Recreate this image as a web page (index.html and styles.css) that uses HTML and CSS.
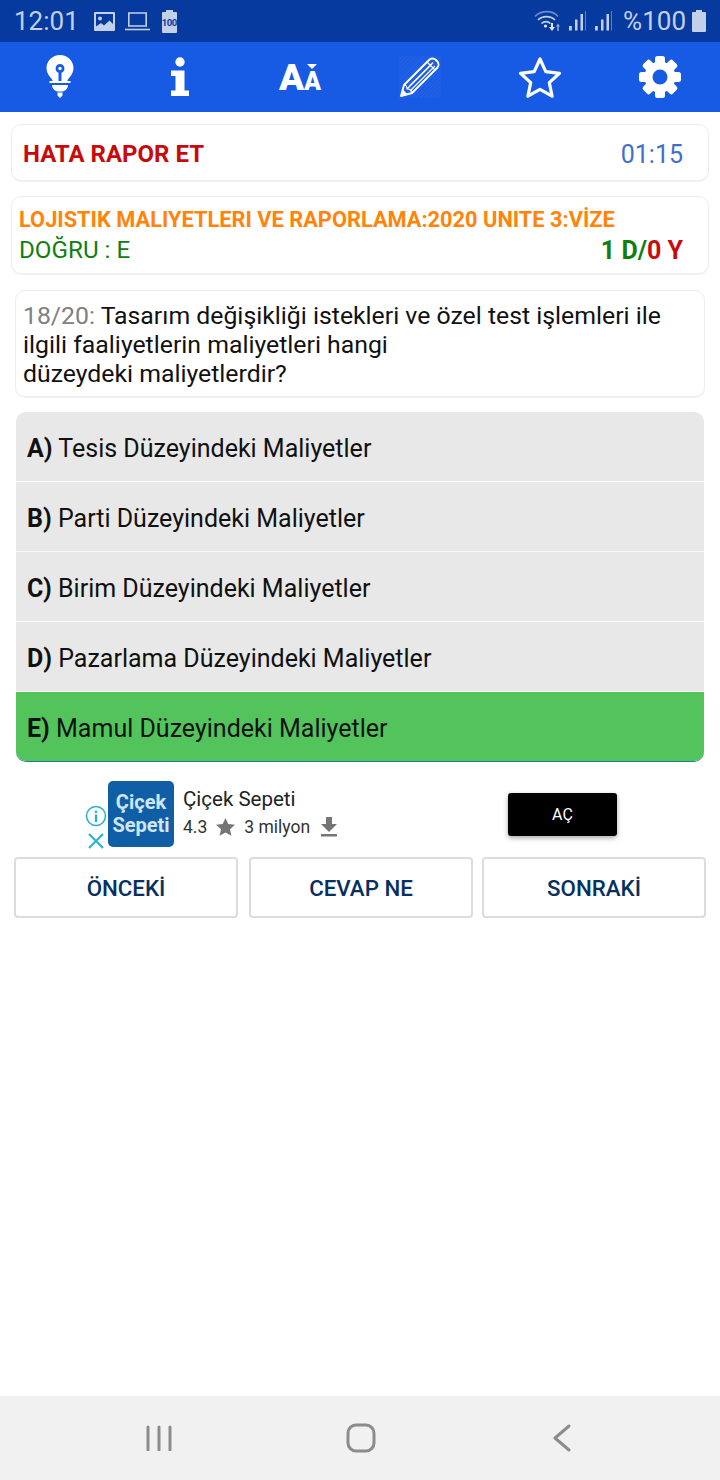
FILE: index.html
```html
<!DOCTYPE html>
<html lang="tr">
<head>
    <meta charset="UTF-8">
    <meta name="viewport" content="width=device-width, initial-scale=1.0">
    <title>Sınav</title>
    <link rel="stylesheet" href="styles.css">
</head>
<body>
    <div class="status-bar">
        <div class="status-left">
            <span class="clock">12:01</span>
            <svg class="st-image" width="21" height="19" viewBox="0 0 21 19"><path fill="#c3d0ea" fill-rule="evenodd" d="M1 0h19a1 1 0 0 1 1 1v17a1 1 0 0 1-1 1H1a1 1 0 0 1-1-1V1a1 1 0 0 1 1-1zM2 14.500V2h17v10l-3.500-3.500-5.500 5-3-2.500z"/><circle cx="6" cy="6.500" r="2" fill="#c3d0ea"/></svg>
            <svg class="st-laptop" width="25" height="20" viewBox="0 0 25 20"><path fill="none" stroke="#c3d0ea" stroke-width="1.600" d="M3.800 2h17.400v13H3.800z"/><path stroke="#c3d0ea" stroke-width="1.600" d="M0 18.500h25"/></svg>
            <div class="batt-small"><span>100</span></div>
        </div>
        <div class="status-right">
            <svg width="26" height="22" viewBox="0 0 26 22"><g fill="none" stroke="#c3d0ea" stroke-width="1.600"><path opacity=".55" d="M1 6.500c6-6.500 18-6.500 23 0"/><path d="M4 10c4.500-4.500 12.500-4.500 17 0"/><path d="M7.500 13.500c2.500-2.500 6.500-2.500 9 0"/></g><circle cx="11.500" cy="16" r="1.600" fill="#dfe6f5"/><path fill="#dfe6f5" d="M17 13h2v4h2l-3 4-3-4h2z"/><path fill="#8ea6d6" d="M24 13.500l2 3h-1.200V21h-1.600v-4.500H22z"/></svg>
            <svg width="17" height="22" viewBox="0 0 17 22"><g fill="#c3d0ea"><path d="M0 16h2.800v4.500H0zM6 9.500h2.500v11H6zM11.500 4H14v16.500h-2.500z"/><path opacity=".45" d="M16 1h1v19.500h-1z"/></g></svg>
            <svg width="17" height="22" viewBox="0 0 17 22"><g fill="#c3d0ea"><path d="M0 16h2.800v4.500H0zM6 9.500h2.500v11H6zM11.500 4H14v16.500h-2.500z"/><path opacity=".45" d="M16 1h1v19.500h-1z"/></g></svg>
            <span class="pct">%100</span>
            <svg width="14" height="22" viewBox="0 0 14 22"><path fill="#c3d0ea" d="M4 0h6v2h3a1 1 0 0 1 1 1v18a1 1 0 0 1-1 1H1a1 1 0 0 1-1-1V3a1 1 0 0 1 1-1h3z"/></svg>
        </div>
    </div>

    <div class="toolbar">
        <svg width="28" height="44" viewBox="0 0 28 44"><path fill="#fff" fill-rule="evenodd" d="M14 0c7.500 0 13.500 5.800 13.500 13 0 4-1.800 7-4 9.500-1.400 1.600-2 2.600-2.200 3.500H6.700c-.2-.9-.8-1.900-2.200-3.500C2.300 20 .5 17 .5 13 .5 5.800 6.500 0 14 0zm0 9a4.500 4.500 0 0 0-1.500 8.700V26h3v-8.300A4.500 4.500 0 0 0 14 9zm0 2.800a1.700 1.700 0 1 1 0 3.400 1.700 1.700 0 0 1 0-3.400z"/><path fill="#fff" d="M3.500 26h21v2h-21zM6 30h16c0 3-2 5.500-5 6.500h-6C8 35.500 6 33 6 30zM11.500 37.500h5v3L14 43l-2.500-2.500z"/></svg>
        <svg width="20" height="40" viewBox="0 0 20 40"><circle cx="10" cy="5" r="4.700" fill="#fff"/><path fill="#fff" d="M1 13.500h13.500v20H19V39H1v-5.500h4.500V19H1z"/></svg>
        <div class="font-ico"><span class="big-a">A</span><span class="small-a">A</span></div>
        <svg width="44" height="44" viewBox="0 0 44 44">
            <defs><pattern id="hatch" width="3" height="3" patternUnits="userSpaceOnUse" patternTransform="rotate(-45)"><path stroke="#fff" stroke-opacity=".08" stroke-width="1" d="M0 1h3"/></pattern></defs>
            <rect x="1" y="1" width="42" height="42" fill="url(#hatch)"/>
            <path fill="none" stroke="#fff" stroke-width="1.900" stroke-linejoin="round" d="M3 41l3-11L31 5c2-2 5-2 7 0l1 1c2 2 2 5 0 7L14 38z"/>
            <path fill="none" stroke="#fff" stroke-width="1.200" d="M6 30c3 0 3 2 3 4 2 0 5 0 5 4M9 34L34 9M11.500 31L35 7.500M12 36L37 11M29 7l8 8"/>
            <path fill="#fff" d="M3 41l1.800-6.500 4.700 4.700z"/>
        </svg>
        <svg width="44" height="42" viewBox="0 0 44 42"><path fill="none" stroke="#fff" stroke-width="3.200" stroke-linejoin="round" d="M22 3l5.800 12.700 13.700 1.600-10.200 9.300 2.800 13.600L22 33.300l-12.100 6.900 2.800-13.600L2.500 17.300l13.700-1.600z"/></svg>
        <svg width="42" height="42" viewBox="0 0 42 42">
            <g fill="#fff">
                <circle cx="21" cy="21" r="15.500"/>
                <rect x="16" y="0" width="10" height="10" rx="2.500"/>
                <rect x="16" y="0" width="10" height="10" rx="2.500" transform="rotate(45 21 21)"/>
                <rect x="16" y="0" width="10" height="10" rx="2.500" transform="rotate(90 21 21)"/>
                <rect x="16" y="0" width="10" height="10" rx="2.500" transform="rotate(135 21 21)"/>
                <rect x="16" y="0" width="10" height="10" rx="2.500" transform="rotate(180 21 21)"/>
                <rect x="16" y="0" width="10" height="10" rx="2.500" transform="rotate(225 21 21)"/>
                <rect x="16" y="0" width="10" height="10" rx="2.500" transform="rotate(270 21 21)"/>
                <rect x="16" y="0" width="10" height="10" rx="2.500" transform="rotate(315 21 21)"/>
            </g>
            <circle cx="21" cy="21" r="7.500" fill="#175ae4"/>
        </svg>
    </div>

    <div class="card report-card">
        <span class="report">HATA RAPOR ET</span>
        <span class="timer">01:15</span>
    </div>

    <div class="card info-card">
        <div class="exam-title">LOJISTIK MALIYETLERI VE RAPORLAMA:2020 UNITE 3:VİZE</div>
        <div class="info-row">
            <span class="answer">DOĞRU : E</span>
            <span class="score">1 D/<em>0 Y</em></span>
        </div>
    </div>

    <div class="card question">
        <span class="q-no">18/20:</span> Tasarım değişikliği istekleri ve özel test işlemleri ile<br>
        ilgili faaliyetlerin maliyetleri hangi<br>
        düzeydeki maliyetlerdir?
    </div>

    <div class="options">
        <div class="option"><b>A)</b> Tesis Düzeyindeki Maliyetler</div>
        <div class="option"><b>B)</b> Parti Düzeyindeki Maliyetler</div>
        <div class="option"><b>C)</b> Birim Düzeyindeki Maliyetler</div>
        <div class="option"><b>D)</b> Pazarlama Düzeyindeki Maliyetler</div>
        <div class="option correct"><b>E)</b> Mamul Düzeyindeki Maliyetler</div>
    </div>

    <div class="ad">
        <div class="ad-marks">
            <svg width="22" height="22" viewBox="0 0 22 22"><circle cx="11" cy="11" r="9.500" fill="none" stroke="#2bb3d0" stroke-width="1.600"/><path fill="#2bb3d0" d="M9.800 9.500h2.400V17H9.800z"/><circle cx="11" cy="6.800" r="1.400" fill="#2bb3d0"/></svg>
            <svg width="18" height="18" viewBox="0 0 18 18"><path stroke="#2bb3d0" stroke-width="2.200" d="M2 2l14 14M16 2L2 16"/></svg>
        </div>
        <div class="ad-logo"><span>Çiçek</span><span>Sepeti</span></div>
        <div class="ad-text">
            <div class="ad-name">Çiçek Sepeti</div>
            <div class="ad-meta">
                <span>4.3</span>
                <svg width="19" height="18" viewBox="0 0 19 18"><path fill="#757575" d="M9.500 0l2.800 6 6.700.7-5 4.500 1.400 6.600-5.900-3.400-5.900 3.400 1.400-6.600-5-4.500 6.700-.7z"/></svg>
                <span>3 milyon</span>
                <svg width="18" height="20" viewBox="0 0 18 20"><path fill="#757575" d="M6 0h6v7h5l-8 8-8-8h5zM1 17h16v2.500H1z"/></svg>
            </div>
        </div>
        <div class="ad-btn">AÇ</div>
    </div>

    <div class="buttons">
        <div class="btn">ÖNCEKİ</div>
        <div class="btn btn-mid">CEVAP NE</div>
        <div class="btn">SONRAKİ</div>
    </div>

    <div class="spacer"></div>

    <div class="nav-bar">
        <svg width="26" height="26" viewBox="0 0 26 26"><path stroke="#8c8c8c" stroke-width="3" stroke-linecap="round" d="M2 2v23M13 2v23M24 2v23"/></svg>
        <svg class="nav-home" width="30" height="30" viewBox="0 0 30 30"><rect x="2" y="2" width="26" height="26" rx="8" fill="none" stroke="#8c8c8c" stroke-width="3"/></svg>
        <svg width="18" height="28" viewBox="0 0 18 28"><path fill="none" stroke="#8c8c8c" stroke-width="3" stroke-linecap="round" stroke-linejoin="round" d="M16 2L2 14l14 12"/></svg>
    </div>
</body>
</html>
```

FILE: styles.css
```css
/* General styles */
html, body {
    height: 100%;
}

body {
    font-family: Roboto, "Noto Sans", sans-serif;
    margin: 0;
    background-color: #fff;
    display: flex;
    flex-direction: column;
    height: 1480px;
    overflow: hidden;
}

/* Status bar */
.status-bar {
    height: 42px;
    background-color: #063a9f;
    color: #c3d0ea;
    display: flex;
    justify-content: space-between;
    align-items: center;
    padding: 0 14px;
    flex-shrink: 0;
}

.status-left, .status-right {
    display: flex;
    align-items: center;
}

.clock {
    font-size: 26px;
    margin-right: 15px;
}

.st-image {
    margin-right: 10px;
}

.st-laptop {
    margin-right: 12px;
}

.batt-small {
    width: 15px;
    height: 21px;
    margin-top: 2px;
    background: #c3d0ea;
    border-radius: 1px;
    color: #063a9f;
    font-size: 9.500px;
    font-weight: 700;
    letter-spacing: -0.5px;
    display: flex;
    align-items: center;
    justify-content: center;
    position: relative;
}

.batt-small::before {
    content: "";
    position: absolute;
    top: -2px;
    left: 4px;
    width: 7px;
    height: 2px;
    background: #c3d0ea;
}

.status-right {
    gap: 9px;
}

.pct {
    font-size: 26px;
    margin-left: 2px;
    margin-right: -3px;
}

/* Toolbar */
.toolbar {
    height: 70px;
    background-color: #175ae4;
    display: grid;
    grid-template-columns: repeat(6, 120px);
    justify-items: center;
    align-items: center;
    flex-shrink: 0;
}

.font-ico {
    color: #fff;
    font-weight: 900;
    display: flex;
    align-items: baseline;
    line-height: 1;
    padding-top: 1px;
}

.big-a {
    font-size: 37px;
}

.small-a {
    font-size: 25px;
    position: relative;
}

.small-a::before {
    content: "";
    position: absolute;
    top: -5px;
    left: 3px;
    border-left: 5px solid transparent;
    border-right: 5px solid transparent;
    border-top: 5px solid #fff;
}

/* Cards */
.card {
    background: #fff;
    border: 1px solid #eee;
    border-radius: 10px;
    box-shadow: 0 1px 1px rgba(0, 0, 0, 0.05);
}

.report-card {
    margin: 12px 11px 0;
    height: 57px;
    box-sizing: border-box;
    padding: 2px 25px 0 11px;
    display: flex;
    justify-content: space-between;
    align-items: center;
}

.report {
    color: #c80a0a;
    font-size: 24px;
    font-weight: 700;
}

.timer {
    color: #3f6fc9;
    font-size: 25px;
    padding-top: 2px;
}

.info-card {
    margin: 15px 11px 0;
    height: 78px;
    box-sizing: border-box;
    padding: 8px 25px 0 7px;
}

.exam-title {
    color: #ff8409;
    font-size: 21.800px;
    font-weight: 700;
    line-height: 29px;
    white-space: nowrap;
}

.info-row {
    display: flex;
    justify-content: space-between;
    font-size: 24.200px;
    line-height: 33px;
}

.answer {
    color: #0f8010;
}

.score {
    color: #0f8010;
    font-size: 25px;
    font-weight: 700;
}

.score em {
    color: #c80a0a;
    font-style: normal;
}

.question {
    margin: 16px 15px 0;
    height: 107px;
    box-sizing: border-box;
    padding: 10px 7px 0;
    font-size: 24.800px;
    line-height: 29px;
    color: #111;
}

.q-no {
    color: #808080;
}

/* Options */
.options {
    margin: 15px 16px 0;
    border-radius: 10px;
    overflow: hidden;
    border-bottom: 1px solid #1f7f8f;
}

.option {
    height: 69px;
    box-sizing: content-box;
    background: #e8e8e8;
    border-bottom: 1px solid #fafafa;
    padding-left: 11px;
    line-height: 73px;
    font-size: 25px;
    color: #111;
}

.correct {
    background: #53c45c;
    border-bottom: none;
}

/* Ad */
.ad {
    height: 95px;
    display: flex;
    align-items: flex-start;
    padding: 19px 0 0 84px;
    box-sizing: border-box;
}

.ad-marks {
    width: 24px;
    padding-top: 24px;
    display: flex;
    flex-direction: column;
    align-items: center;
    gap: 5px;
}

.ad-logo {
    width: 66px;
    height: 66px;
    background: #0f5ea6;
    border-radius: 5px;
    color: #cfe6f2;
    font-weight: 700;
    font-size: 20px;
    line-height: 23px;
    display: flex;
    flex-direction: column;
    align-items: center;
    justify-content: center;
}

.ad-text {
    margin-left: 9px;
    width: 325px;
    padding-top: 4px;
}

.ad-name {
    font-size: 20.500px;
    line-height: 28px;
    color: #222;
}

.ad-meta {
    display: flex;
    align-items: center;
    gap: 9px;
    font-size: 17.500px;
    line-height: 28px;
    color: #333;
}

.ad-meta svg:last-child {
    margin-left: 1px;
}

.ad-btn {
    width: 109px;
    height: 43px;
    margin-top: 12px;
    background: #000;
    color: #fff;
    border-radius: 3px;
    font-size: 16px;
    display: flex;
    align-items: center;
    justify-content: center;
    box-shadow: 0 2px 5px rgba(0, 0, 0, 0.35);
}

/* Bottom buttons */
.buttons {
    display: flex;
    gap: 10px;
    margin: 0 14px;
}

.btn {
    flex: 1;
    height: 61px;
    box-sizing: border-box;
    border: 2px solid #dcdcdc;
    border-radius: 4px;
    display: flex;
    align-items: center;
    justify-content: center;
    color: #07305f;
    font-size: 22.300px;
    font-weight: 500;
}

.btn-mid {
    margin: 0 -1px 0 1px;
}

.spacer {
    flex: 1;
}

/* Navigation bar */
.nav-bar {
    height: 84px;
    background: #f1f1f1;
    display: flex;
    align-items: center;
    justify-content: space-between;
    padding: 0 149px 0 146px;
    flex-shrink: 0;
}

.nav-home {
    margin-right: 4px;
}
```
